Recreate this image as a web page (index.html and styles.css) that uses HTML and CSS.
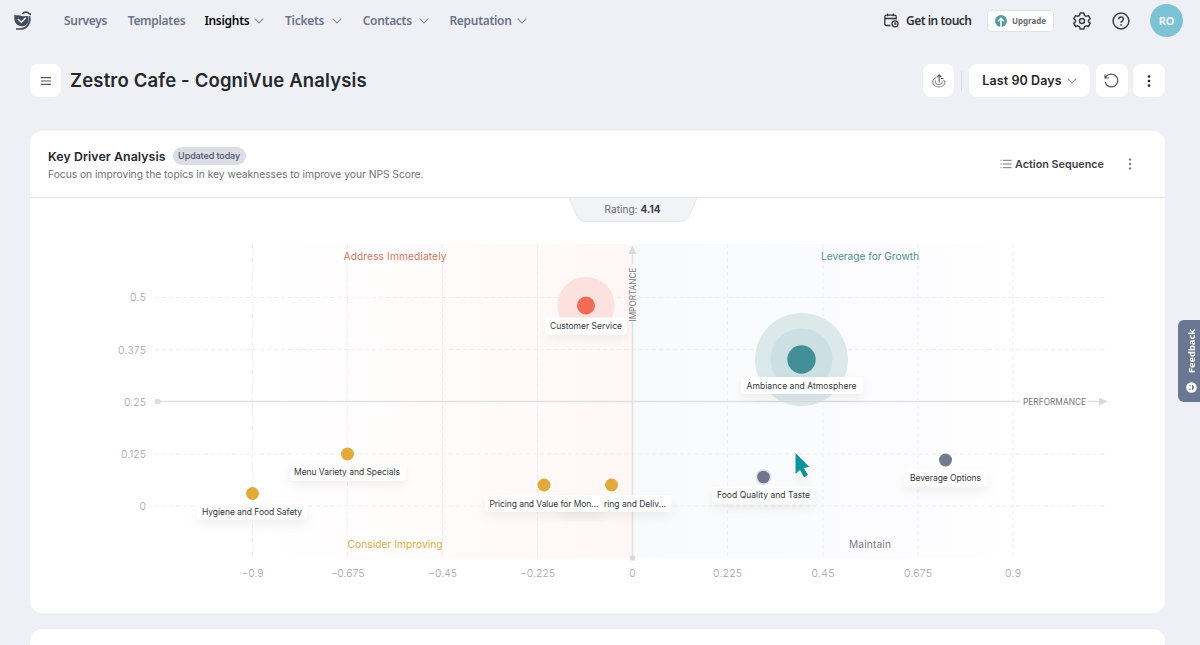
FILE: index.html
```
<!DOCTYPE html>
<html lang="en">
<head>
  <meta charset="UTF-8" />
  <meta name="viewport" content="width=device-width, initial-scale=1.0" />
  <title>Zestro Cafe - CogniVue Analysis</title>
  <link rel="stylesheet" href="styles.css">
</head>
<body>
  <header class="topbar">
    <svg class="logo" width="18" height="20" viewBox="0 0 18 20">
      <path d="M.3 3.800C3 4.800 5.500 3.600 8.500 5.200L13.800 5C15.500 9 14.500 12.500 12 14C10 15.500 7 15.800 4.500 14.500C1.500 13 .3 10.500 .3 7.500Z" fill="#454b5e"/>
      <path d="M4 8L7.300 11.300L11.800 6.800" fill="none" stroke="#eef0f6" stroke-width="1.500"/>
      <path d="M8.500 3.200C9.500 .8 13.500 .2 15 2.600L17 3.600M15.300 5C17.500 12 12.500 18 6 18H2" fill="none" stroke="#454b5e" stroke-width="1.700"/>
    </svg>
    <nav class="menu">
      <a class="m-surveys">Surveys</a>
      <a class="m-templates">Templates</a>
      <a class="m-insights active">Insights <svg class="chev" viewBox="0 0 10 6"><path d="M.7 .7L5 5L9.300 .7"/></svg></a>
      <a class="m-tickets">Tickets <svg class="chev" viewBox="0 0 10 6"><path d="M.7 .7L5 5L9.300 .7"/></svg></a>
      <a class="m-contacts">Contacts <svg class="chev" viewBox="0 0 10 6"><path d="M.7 .7L5 5L9.300 .7"/></svg></a>
      <a class="m-reputation">Reputation <svg class="chev" viewBox="0 0 10 6"><path d="M.7 .7L5 5L9.300 .7"/></svg></a>
    </nav>
    <div class="tools">
      <a class="touch">
        <svg width="15" height="15" viewBox="0 0 15 15" fill="none" stroke="#33343a" stroke-width="1.300">
          <path d="M6.500 12.500H2.500Q.8 12.500 .8 10.800V3.800Q.8 2.200 2.500 2.200H10.500Q12.200 2.200 12.200 3.800V6.500M.8 5.500H12.200M3.600 .5V3.300M9.400 .5V3.300"/>
          <circle cx="11" cy="10.800" r="3"/><path d="M11 9.300V11H12.300"/>
        </svg>
        <span>Get in touch</span>
      </a>
      <button class="upgrade">
        <svg width="12" height="12" viewBox="0 0 12 12"><circle cx="6" cy="6" r="6" fill="#579ba1"/><path d="M6 12V3.600M3 6.300L6 3.300L9 6.300" fill="none" stroke="#fff" stroke-width="1.500"/></svg>
        <span>Upgrade</span>
      </button>
      <svg class="gear" width="18" height="18" viewBox="0 0 18 18" fill="none" stroke="#3c3f48" stroke-width="1.500" stroke-linejoin="round">
        <path d="M7.200 1H10.800L11.400 3.300L13.200 4.300L15.400 3.600L17.200 6.700L15.500 8.300V9.800L17.200 11.400L15.400 14.500L13.200 13.800L11.400 14.800L10.800 17H7.200L6.600 14.800L4.800 13.800L2.600 14.500L.8 11.400L2.500 9.800V8.300L.8 6.700L2.600 3.600L4.800 4.300L6.600 3.300Z"/>
        <circle cx="9" cy="9" r="2.500"/>
      </svg>
      <svg class="help" width="18" height="18" viewBox="0 0 18 18" fill="none" stroke="#3c3f48" stroke-width="1.500">
        <circle cx="9" cy="9" r="7.900"/>
        <path d="M6.700 7.200C6.700 4.200 11.400 4.200 11.400 7C11.400 8.800 9 8.800 9 10.800"/><path d="M9 12.200V13.700"/>
      </svg>
      <div class="avatar">RO</div>
    </div>
  </header>

  <main>
    <div class="page-head">
      <button class="box"><svg width="10" height="8" viewBox="0 0 10 8"><path d="M0 .6H10M0 4H10M0 7.400H10" stroke="#55565b" stroke-width="1.100"/></svg></button>
      <h1>Zestro Cafe - CogniVue Analysis</h1>
      <div class="actions">
        <button class="box small">
          <svg width="14" height="14" viewBox="0 0 14 14" fill="none" stroke="#85868a" stroke-width="1.100">
            <path d="M4.300 3.500C2 4.300 .8 6 .8 8C.8 11 3.500 13 6.800 13C10.300 13 13 11 13 8L11.600 6M3.500 6.500C3 9 4.500 10.500 6.800 10.500C8.800 10.500 10.200 9.500 10.300 7.800"/>
            <path d="M7.200 8.500V1M5 3.200L7.200 .9L9.400 3.200M9 4.500H11.500" stroke="#55565a"/>
          </svg>
        </button>
        <span class="divider"></span>
        <button class="box period"><span>Last 90 Days</span><svg class="chev" viewBox="0 0 10 6"><path d="M.7 .7L5 5L9.300 .7"/></svg></button>
        <button class="box">
          <svg width="15" height="15" viewBox="0 0 15 15" fill="none" stroke="#555" stroke-width="1.200"><path d="M1 1.500V5H4.700M1.300 4.800C3.500 .2 9.500 -.2 12.500 3.700C15.300 7.600 12.800 13.800 7.500 13.900C4.300 13.900 2 12 1.300 9"/></svg>
        </button>
        <button class="box"><svg width="4" height="12" viewBox="0 0 4 12" fill="#222"><circle cx="2" cy="1.500" r="1.300"/><circle cx="2" cy="6" r="1.300"/><circle cx="2" cy="10.500" r="1.300"/></svg></button>
      </div>
    </div>

    <section class="card">
      <div class="card-head">
        <div>
          <div class="card-title"><h2>Key Driver Analysis</h2><span class="badge">Updated today</span></div>
          <p>Focus on improving the topics in key weaknesses to improve your NPS Score.</p>
        </div>
        <div class="card-actions">
          <svg width="12" height="10" viewBox="0 0 13 10" stroke="#66676d" stroke-width="1"><path d="M3 1H12.500M3 5H12.500M3 9H12.500M.5 1H1.600M.5 5H1.600M.5 9H1.600"/></svg>
          <b>Action Sequence</b>
          <svg class="dots" width="4" height="12" viewBox="0 0 4 12" fill="#808187"><circle cx="2" cy="1.500" r="1.200"/><circle cx="2" cy="6" r="1.200"/><circle cx="2" cy="10.500" r="1.200"/></svg>
        </div>
      </div>

      <svg class="chart" width="1135" height="415" viewBox="30 198 1135 415">
        <defs>
          <linearGradient id="weak"><stop offset="0" stop-color="#fff"/><stop offset=".3" stop-color="#fffdfd"/><stop offset="1" stop-color="#fff7f6"/></linearGradient>
          <linearGradient id="strong"><stop offset="0" stop-color="#f7fafb"/><stop offset=".75" stop-color="#fdfcfe"/><stop offset="1" stop-color="#fff"/></linearGradient>
          <filter id="shadow" x="-20%" y="-50%" width="140%" height="280%"><feDropShadow dx="0" dy="5" stdDeviation="5" flood-color="#000" flood-opacity=".05"/></filter>
        </defs>

        <path d="M569 198H697L690 214Q687 221.500 680 221.500H586Q579 221.500 576 214Z" fill="#f1f3f6"/>
        <path d="M697 198L690 214Q687 221.500 680 221.500H586Q579 221.500 576 214L569 198" fill="none" stroke="#e5e8eb"/>
        <text class="rating" x="604.500" y="213" textLength="33">Rating:</text>
        <text class="rating value" x="640.500" y="213" textLength="20">4.14</text>

        <rect x="252" y="244" width="380" height="314" fill="url(#weak)"/>
        <rect x="633" y="244" width="380" height="314" fill="url(#strong)"/>

        <g class="grid">
          <path d="M155 297.500H1108M155 349.500H1108M155 454H1108M155 506H1108"/>
          <path d="M252.500 244V558M347.500 244V558M442.500 244V558M537.500 244V558M727.500 244V558M823 244V558M918 244V558M1013 244V558"/>
        </g>
        <g class="axis">
          <path d="M157 401.500H1020M1088 401.500H1100M632.500 558V322M632.500 264V252"/>
          <path class="arrow" d="M1099 397.500L1108 401.500L1099 405.500ZM628.500 254L632.500 245.500L636.500 254Z"/>
          <circle class="arrow" cx="632.500" cy="558" r="2.800"/>
          <rect class="arrow" x="154.500" y="399" width="6" height="5" rx="2"/>
        </g>
        <text class="axis-name" x="1023" y="405" textLength="63">PERFORMANCE</text>
        <text class="axis-name" transform="translate(636 321.500) rotate(-90)" textLength="54">IMPORTANCE</text>

        <g class="ticks end">
          <text x="146" y="301" textLength="16">0.5</text>
          <text x="146" y="353.500" textLength="28">0.375</text>
          <text x="146" y="405.500" textLength="22">0.25</text>
          <text x="146" y="458" textLength="25">0.125</text>
          <text x="146" y="510">0</text>
        </g>
        <g class="ticks">
          <text x="252.500" y="577" textLength="22">−0.9</text>
          <text x="347.500" y="577" textLength="34">−0.675</text>
          <text x="442.500" y="577" textLength="29">−0.45</text>
          <text x="537.500" y="577" textLength="35">−0.225</text>
          <text x="632.500" y="577">0</text>
          <text x="727.500" y="577" textLength="29">0.225</text>
          <text x="823" y="577" textLength="23">0.45</text>
          <text x="918" y="577" textLength="28">0.675</text>
          <text x="1013" y="577" textLength="16">0.9</text>
        </g>

        <g class="zones">
          <text x="395" y="260" fill="#cd7960" textLength="103">Address Immediately</text>
          <text x="870" y="260" fill="#529092" textLength="98">Leverage for Growth</text>
          <text x="395" y="548" fill="#d8ae4b" textLength="95">Consider Improving</text>
          <text x="870" y="548" fill="#7d7e85" textLength="42">Maintain</text>
        </g>

        <!-- bubbles -->
        <circle cx="586" cy="305.500" r="28.500" fill="#fce1de"/>
        <circle cx="586" cy="305.500" r="9" fill="#f26b55"/>
        <circle cx="801.500" cy="359.500" r="46.500" fill="#dce9eb"/>
        <circle cx="801.500" cy="359.500" r="31" fill="#cce0e3"/>
        <circle cx="801.500" cy="359.500" r="14.200" fill="#428f98"/>
        <path d="M755 401.500H848" stroke="#cfd6d9" stroke-opacity=".6"/>
        <g fill="#e2a93b">
          <circle cx="347.500" cy="454" r="6.500"/>
          <circle cx="252.500" cy="493.500" r="6.500"/>
          <circle cx="544" cy="485" r="6.500"/>
          <circle cx="611.500" cy="485" r="6.500"/>
        </g>
        <circle cx="763.500" cy="477" r="8" fill="#dfe2ee"/>
        <circle cx="763.500" cy="477" r="6.300" fill="#70758c"/>
        <circle cx="945.500" cy="460" r="6.500" fill="#737b8c"/>

        <!-- bubble labels -->
        <g class="tags">
          <rect x="545" y="317.500" width="82" height="17"/>
          <text x="586" y="329" textLength="72">Customer Service</text>
          <rect x="741" y="377" width="122" height="17"/>
          <text x="801.500" y="389" textLength="110">Ambiance and Atmosphere</text>
          <rect x="289" y="463.500" width="117" height="17"/>
          <text x="347" y="475" textLength="106">Menu Variety and Specials</text>
          <rect x="197" y="503" width="110" height="17"/>
          <text x="252" y="514.500" textLength="100">Hygiene and Food Safety</text>
          <rect x="560" y="495" width="111" height="17"/>
          <text class="left" x="604" y="506.500" textLength="62">ring and Deliv...</text>
          <rect x="485" y="495" width="118" height="17"/>
          <text x="544" y="506.500" textLength="109">Pricing and Value for Mon...</text>
          <rect x="712" y="486.500" width="103" height="17"/>
          <text x="763.500" y="498" textLength="93">Food Quality and Taste</text>
          <rect x="904" y="469.500" width="83" height="17"/>
          <text x="945.500" y="481" textLength="71">Beverage Options</text>
        </g>

        <path class="cursor" d="M795.500 453L809.500 467L803.800 468L808 475L804 477.500L800 470L795.500 474Z"/>
      </svg>
    </section>

    <section class="card next"></section>
  </main>

  <div class="feedback">
    <span>Feedback</span>
    <svg width="11" height="11" viewBox="0 0 11 11"><circle cx="5.500" cy="5.500" r="5.300" fill="#fff"/><circle cx="4" cy="3.700" r=".8" fill="#6b7693"/><circle cx="4" cy="7.300" r=".8" fill="#6b7693"/><path d="M6 2.800Q10 5.500 6 8.200Z" fill="#6b7693"/></svg>
  </div>
</body>
</html>
```
FILE: styles.css
```
* {
  box-sizing: border-box;
}

body {
  margin: 0;
  height: 645px;
  overflow: hidden;
  position: relative;
  background: #eef0f5;
  font-family: Inter, "Liberation Sans", sans-serif;
  color: #26272b;
}

svg {
  display: block;
  flex: none;
}

button {
  border: none;
  padding: 0;
  font: inherit;
  color: inherit;
  cursor: pointer;
}

.topbar {
  height: 41px;
  display: flex;
  align-items: center;
  padding: 0 17px 0 14px;
  font-family: "Noto Sans", sans-serif;
  font-size: 12px;
  font-weight: 600;
  color: #6c7389;
}

.menu {
  display: flex;
  margin-left: 32px;
}

.menu a {
  display: flex;
  align-items: center;
  justify-content: space-between;
  margin-right: 20.7px;
  white-space: nowrap;
  letter-spacing: -0.3px;
}

.m-surveys { width: 43px; }
.m-templates { width: 56px; }
.m-insights { width: 60px; }
.m-tickets { width: 57px; }
.m-contacts { width: 66px; }
.m-reputation { width: 78px; }

.menu .active {
  color: #08090c;
}

.chev {
  width: 10px;
  height: 6px;
  fill: none;
  stroke: #8b8f9b;
  stroke-width: 1.2;
}

.tools {
  margin-left: auto;
  display: flex;
  align-items: center;
}

.touch {
  display: flex;
  align-items: center;
  gap: 7px;
  width: 87px;
  color: #303138;
  white-space: nowrap;
  letter-spacing: -0.5px;
}

.upgrade {
  display: flex;
  align-items: center;
  justify-content: center;
  gap: 5px;
  width: 67px;
  height: 22px;
  margin: 0 19px 0 16px;
  background: #fff;
  border: 1px solid #dfe2e9;
  border-radius: 4px;
  font-size: 8px;
  font-weight: 700;
  color: #686c75;
}

.help {
  margin: 0 20px 0 21px;
}

.avatar {
  width: 33px;
  height: 33px;
  border-radius: 50%;
  background: #7ec2d6;
  color: #fff;
  display: flex;
  align-items: center;
  justify-content: center;
  font-size: 11px;
}

main {
  padding: 23px 35px 0 30px;
}

.page-head {
  display: flex;
  align-items: center;
  height: 33px;
}

.box {
  width: 32px;
  height: 33px;
  border-radius: 8px;
  background: #fff;
  display: flex;
  align-items: center;
  justify-content: center;
}

.page-head > .box {
  width: 31px;
}

.small {
  width: 31px;
}

h1 {
  margin: -2px 0 0 9px;
  font-size: 18.5px;
  font-weight: 600;
  letter-spacing: 0.16px;
  white-space: nowrap;
}

.actions {
  margin-left: auto;
  display: flex;
  align-items: center;
}

.divider {
  width: 1px;
  height: 20px;
  margin: 0 7px;
  background: #dcdee4;
}

.period {
  width: 121px;
  gap: 5px;
  margin-right: 5.5px;
  font-size: 12.5px;
  font-weight: 600;
  letter-spacing: 0.1px;
  white-space: nowrap;
}

.period + .box {
  margin-right: 5.5px;
}

.card {
  margin-top: 34px;
  height: 482px;
  background: #fff;
  border-radius: 12px;
}

.next {
  margin-top: 16px;
  height: 16px;
  border-radius: 12px 12px 0 0;
}

.card-head {
  height: 67px;
  padding: 0 33px 0 18px;
  border-bottom: 1px solid #e6e8ec;
  display: flex;
  align-items: center;
  justify-content: space-between;
}

.card-title {
  display: flex;
  align-items: center;
  gap: 7px;
  height: 18px;
}

h2 {
  margin: 0;
  font-size: 12.3px;
  font-weight: 600;
  letter-spacing: 0.1px;
}

.badge {
  height: 18px;
  width: 73px;
  line-height: 18px;
  border-radius: 9px;
  background: #dcdee6;
  color: #50526a;
  font-size: 9px;
  font-weight: 500;
  letter-spacing: -0.1px;
  text-align: center;
  white-space: nowrap;
}

.card-head p {
  margin: 2px 0 0;
  font-size: 10.3px;
  line-height: 14px;
  letter-spacing: -0.03px;
  color: #707176;
}

.card-actions {
  display: flex;
  align-items: center;
  font-size: 10.8px;
  color: #404148;
}

.card-actions b {
  margin: 0 24px 0 3px;
  font-weight: 600;
}

.rating {
  font-size: 10px;
  fill: #66686e;
}

.value {
  font-weight: 700;
  fill: #3b3d44;
}

.grid {
  fill: none;
  stroke: #efeff1;
  stroke-dasharray: 4 3;
}

.axis {
  fill: none;
  stroke: #e0e1e4;
  stroke-width: 1.4;
}

.arrow {
  fill: #d8dadd;
  stroke: none;
}

.axis-name {
  font-size: 8.3px;
  fill: #75767b;
}

.ticks {
  font-size: 10.5px;
  font-weight: 300;
  fill: #a4a5a9;
  text-anchor: middle;
}

.end {
  text-anchor: end;
}

.zones {
  font-size: 10.2px;
  text-anchor: middle;
}

.tags rect {
  fill: #fff;
  rx: 4px;
  filter: url(#shadow);
}

.tags text {
  font-size: 8.5px;
  fill: #34353a;
  text-anchor: middle;
}

.tags .left {
  text-anchor: start;
}

.cursor {
  fill: #11939b;
  stroke: #fff;
  stroke-width: 2.4;
  paint-order: stroke;
  filter: url(#shadow);
}

/* side tab over the page edge */
.feedback {
  position: absolute;
  right: 0;
  top: 320px;
  width: 22px;
  height: 82px;
  padding: 9px 0 9px 4px;
  border-radius: 6px 0 0 6px;
  background: #6b7693;
  color: #fff;
  display: flex;
  flex-direction: column;
  align-items: center;
  justify-content: space-between;
}

.feedback span {
  writing-mode: vertical-rl;
  transform: rotate(180deg);
  font: 700 9.3px "Noto Sans", sans-serif;
}
```
